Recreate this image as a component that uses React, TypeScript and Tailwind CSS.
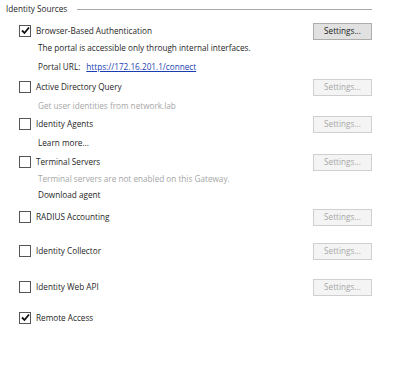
import React from 'react';

type Item = {
  label: string;
  checked?: boolean;
  enabled?: boolean;
  settings?: boolean;
  mt: string;
};

const Check = ({ checked }: { checked?: boolean }) => (
  <span className="w-[12px] h-[12px] border border-[#555] bg-white flex items-center justify-center shrink-0">
    {checked && (
      <svg width="9" height="9" viewBox="0 0 9 9">
        <path d="M1 4.5 L3.5 7 L8 1.5" stroke="#111" strokeWidth="1.8" fill="none" />
      </svg>
    )}
  </span>
);

const SettingsButton = ({ enabled }: { enabled?: boolean }) => (
  <button
    className={
      enabled
        ? 'w-[59px] h-[17px] border border-[#adadad] bg-[#e1e1e1] text-[#222] text-[8.2px] leading-none'
        : 'w-[59px] h-[17px] border border-[#cfcfcf] bg-[#f4f4f4] text-[#a8a8a8] text-[8.2px] leading-none'
    }
  >
    Settings...
  </button>
);

const Row = ({ item }: { item: Item }) => (
  <div className={`h-[16px] flex items-center ${item.mt}`}>
    <div className="pl-[19px] flex items-center gap-[5px] flex-1">
      <Check checked={item.checked} />
      <span className="text-[#262626]">{item.label}</span>
    </div>
    {item.settings && (
      <div className="pr-[28px]">
        <SettingsButton enabled={item.enabled} />
      </div>
    )}
  </div>
);

const Sub = ({ children, mt, muted }: { children: React.ReactNode; mt: string; muted?: boolean }) => (
  <div className={`h-[16px] flex items-center pl-[38px] ${mt} ${muted ? 'text-[#a6a6a6]' : 'text-[#262626]'}`}>
    {children}
  </div>
);

export default function App() {
  return (
    <div
      className="w-[400px] h-[366px] bg-white text-[8.2px] overflow-hidden"
      style={{ fontFamily: '"Open Sans", "Liberation Sans", sans-serif' }}
    >
      {/* Group header */}
      <div className="h-[16px] mt-[1px] flex items-center pl-[6px] pr-[28px] gap-[10px]">
        <span className="text-[#262626]">Identity Sources</span>
        <div className="flex-1 h-px bg-[#a8a8a8]" />
      </div>

      <Row item={{ label: 'Browser-Based Authentication', checked: true, enabled: true, settings: true, mt: 'mt-[6px]' }} />
      <Sub mt="mt-[1px]">The portal is accessible only through internal interfaces.</Sub>
      <Sub mt="mt-[3px]">
        Portal URL:
        <a className="ml-[6px] text-[#1a3eb0] underline">https://172.16.201.1/connect</a>
      </Sub>

      <Row item={{ label: 'Active Directory Query', settings: true, mt: 'mt-[4px]' }} />
      <Sub mt="mt-[3px]" muted>Get user identities from network.lab</Sub>

      <Row item={{ label: 'Identity Agents', settings: true, mt: 'mt-[2px]' }} />
      <Sub mt="mt-[3px]">Learn more...</Sub>

      <Row item={{ label: 'Terminal Servers', settings: true, mt: 'mt-[3px]' }} />
      <Sub mt="mt-[1px]" muted>Terminal servers are not enabled on this Gateway.</Sub>
      <Sub mt="mt-0">Download agent</Sub>

      <Row item={{ label: 'RADIUS Accounting', settings: true, mt: 'mt-[6px]' }} />
      <Row item={{ label: 'Identity Collector', settings: true, mt: 'mt-[18px]' }} />
      <Row item={{ label: 'Identity Web API', settings: true, mt: 'mt-[20px]' }} />
      <Row item={{ label: 'Remote Access', checked: true, mt: 'mt-[15px]' }} />
    </div>
  );
}
